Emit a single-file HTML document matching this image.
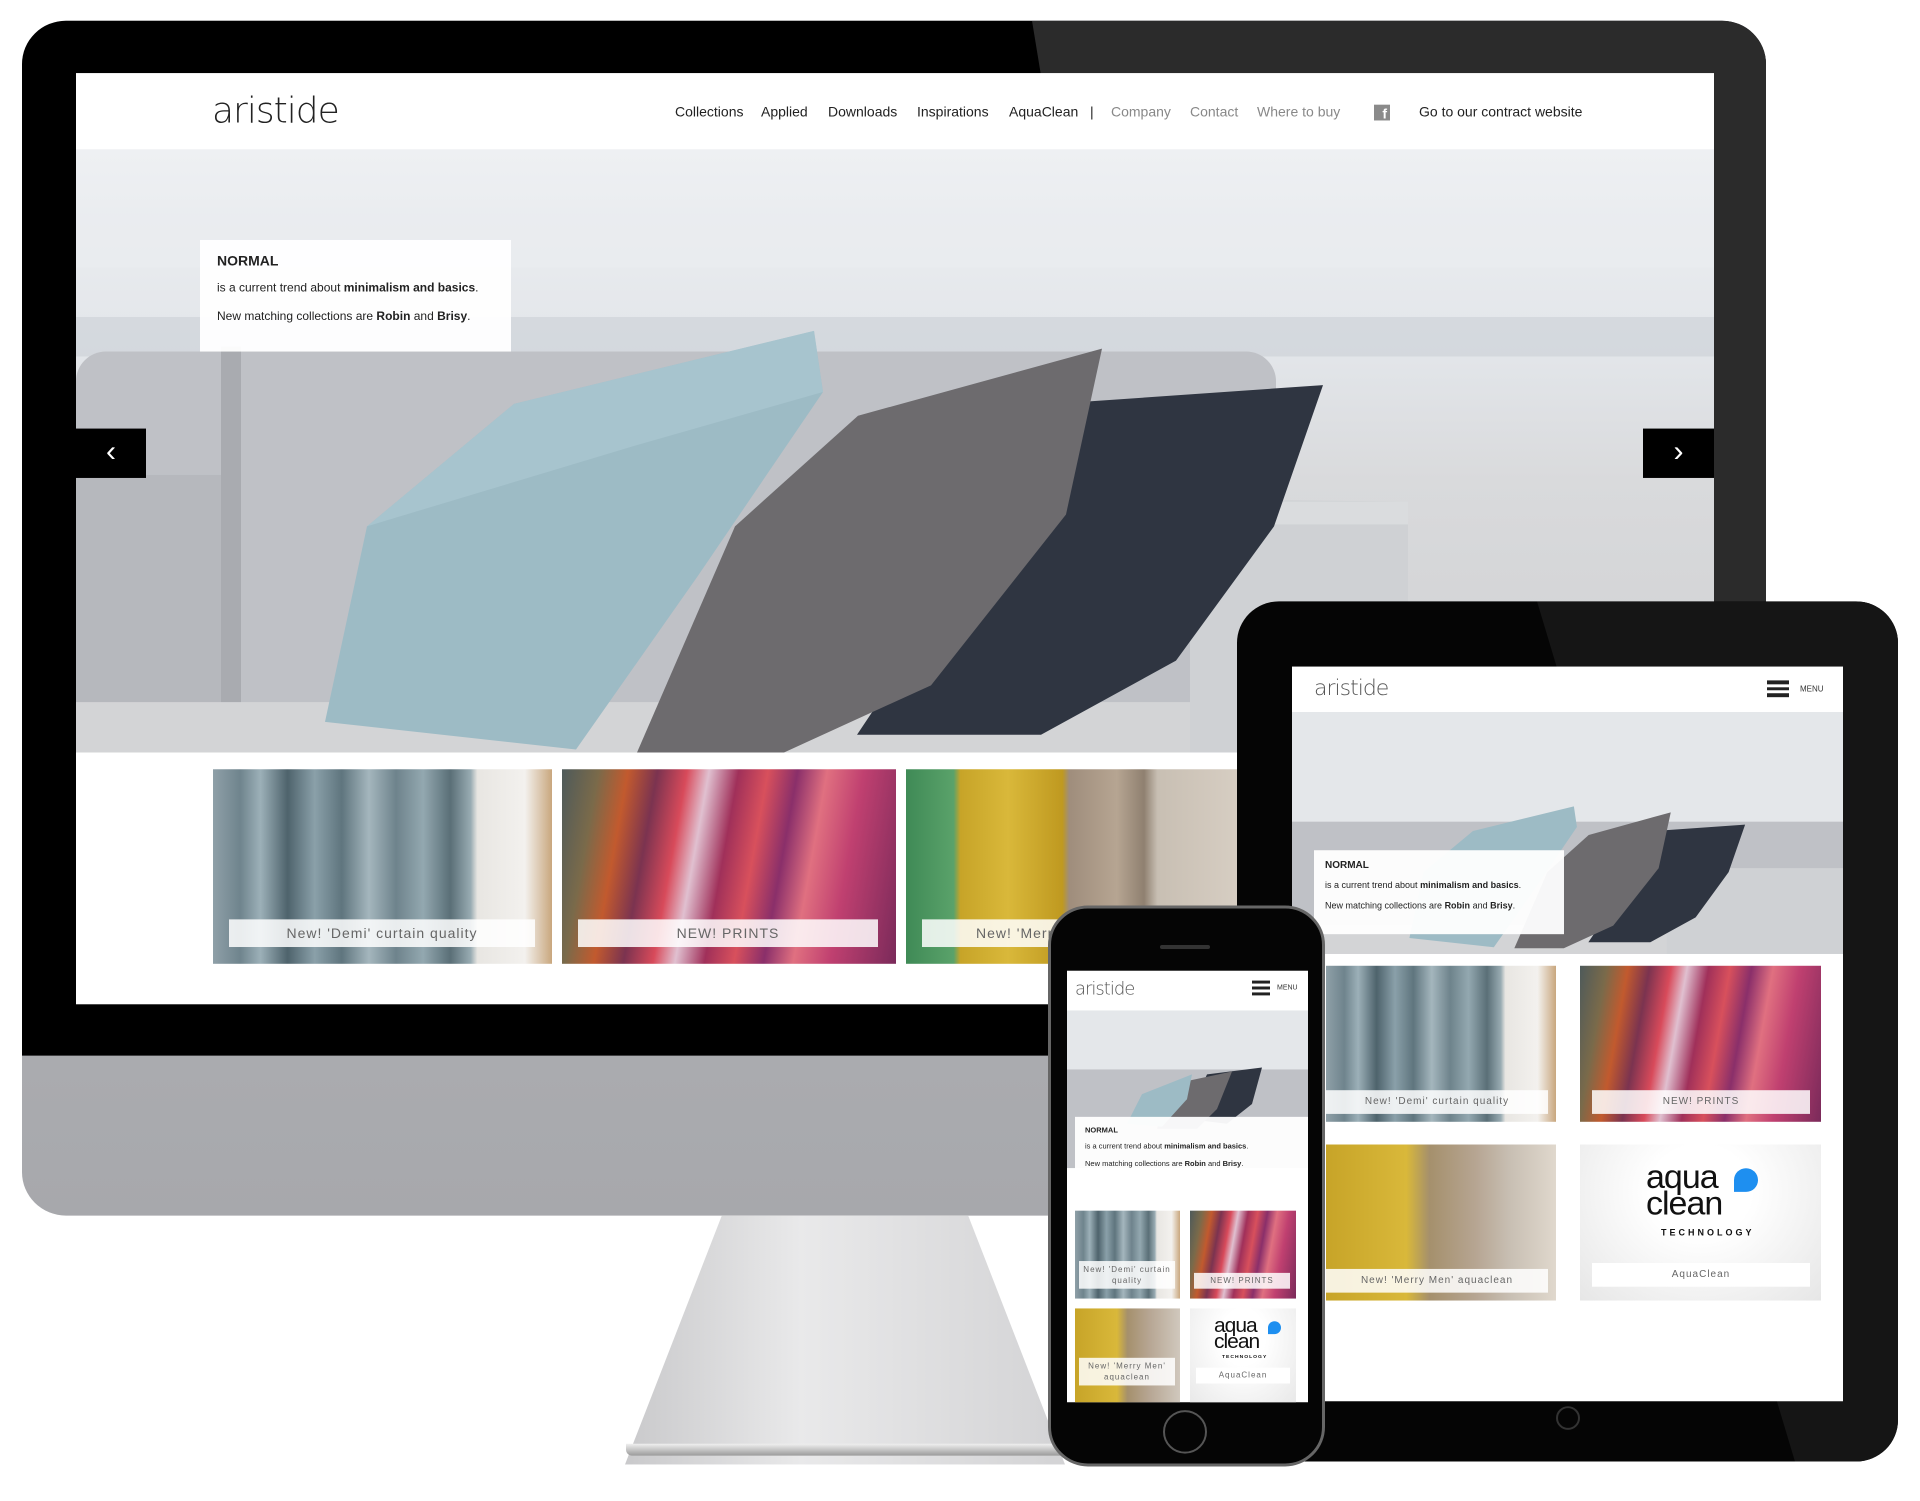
<!DOCTYPE html>
<html><head><meta charset="utf-8"><style>
*{margin:0;padding:0;box-sizing:border-box}
body{width:1920px;height:1500px;background:#fff;position:relative;overflow:hidden;font-family:"Liberation Sans",sans-serif}
#w{position:absolute;left:0;top:0;width:1920px;height:1520px;transform:scale(1,0.9875);transform-origin:0 0}
.abs{position:absolute}
.logo{font-family:"DejaVu Sans","Liberation Sans",sans-serif;font-weight:200;color:#222;letter-spacing:-1px}
.nav span{position:absolute;top:0;font-size:14px;color:#222;white-space:nowrap}
.nav .g{color:#888}
.box{background:rgba(255,255,255,.95);color:#222}
.lbl{position:absolute;background:rgba(255,255,255,.85);color:#666;text-align:center;letter-spacing:1px;white-space:nowrap;overflow:hidden}
.curt{background:linear-gradient(90deg,#8fa0a8 0%,#6f848d 8%,#9cb0b8 14%,#4e636c 22%,#8aa0a9 30%,#5f757e 38%,#a4b6bd 46%,#6e838c 54%,#93a8b0 62%,#5a6f77 70%,#98abb2 76%,#e8e6e2 78%,#f3f1ee 92%,#c9a77e 100%)}
.prnt{background:linear-gradient(100deg,#4e5a5a 0%,#7a6a4a 10%,#c25a2e 18%,#7b3350 26%,#d84a5a 34%,#e0c0d0 40%,#a0305a 48%,#d8505c 56%,#8a2f6a 64%,#e07080 72%,#c04070 82%,#7a2a5a 100%)}
.fab{background:linear-gradient(90deg,#3f8a56 0%,#5aa26a 14%,#c7a428 16%,#d9b83a 30%,#bf9920 46%,#9f8d7c 48%,#b6a592 62%,#8f8070 70%,#c8bfb3 74%,#d8cfc4 100%)}
</style></head><body><div id="w">

<!-- MONITOR -->
<div class="abs" style="left:22px;top:21px;width:1744px;height:1210px;border-radius:44px;background:linear-gradient(180deg,#bfc0c4,#a7a8ac);"></div>
<div class="abs" style="left:22px;top:21px;width:1744px;height:1048px;border-radius:44px 44px 0 0;background:#000;overflow:hidden">
  <div class="abs" style="left:0;top:0;width:1744px;height:1048px;background:#2b2b2b;clip-path:polygon(1010px 0,1744px 0,1744px 1048px,1180px 1048px)"></div>
</div>
<!-- stand -->
<div class="abs" style="left:625px;top:1231px;width:440px;height:252px;background:linear-gradient(90deg,#c9c9cb 0%,#e9e9ea 40%,#d3d3d5 100%);clip-path:polygon(22% 0,78% 0,100% 100%,0 100%);"></div>
<div class="abs" style="left:626px;top:1462px;width:444px;height:12px;background:linear-gradient(180deg,#f0f0f0,#9b9b9b);border-radius:0 0 6px 6px"></div>

<!-- monitor screen -->
<div class="abs" style="left:76px;top:74px;width:1638px;height:943px;background:#fff;overflow:hidden">
  <div class="abs logo" style="left:136px;top:18px;font-size:36px">aristide</div>
  <div class="abs nav" style="left:0;top:31px;width:1638px;height:20px">
    <span style="left:599px">Collections</span>
    <span style="left:685px">Applied</span>
    <span style="left:752px">Downloads</span>
    <span style="left:841px">Inspirations</span>
    <span style="left:933px">AquaClean</span>
    <span style="left:1014px">|</span>
    <span class="g" style="left:1035px">Company</span>
    <span class="g" style="left:1114px">Contact</span>
    <span class="g" style="left:1181px">Where to buy</span>
    <span style="left:1298px;top:1px;width:16px;height:16px;background:#8a8a8a;color:#fff;font-weight:bold;font-size:14px;text-align:right;padding-right:3px;line-height:18px">f</span>
    <span style="left:1343px">Go to our contract website</span>
  </div>
  <!-- hero -->
  <div class="abs" style="left:0;top:77px;width:1638px;height:611px;overflow:hidden">
    <svg width="1638" height="611" viewBox="0 0 1638 611">
      <defs>
        <linearGradient id="bg" x1="0" y1="0" x2="0" y2="1"><stop offset="0" stop-color="#eef0f3"/><stop offset=".35" stop-color="#e2e5e9"/><stop offset=".55" stop-color="#d9dadc"/><stop offset="1" stop-color="#cfd0d2"/></linearGradient>
      </defs>
      <rect width="1638" height="611" fill="url(#bg)"/>
      <rect x="0" y="60" width="1638" height="60" fill="#e9ecef" opacity=".7"/>
      <rect x="0" y="170" width="1638" height="40" fill="#c6ccd2" opacity=".5"/>
      <rect x="0" y="205" width="1200" height="400" rx="30" fill="#bfc1c6"/>
      <rect x="0" y="330" width="160" height="260" fill="#b6b8bd"/>
      <rect x="145" y="200" width="20" height="380" fill="#a9abb0"/>
      <rect x="0" y="560" width="1638" height="51" fill="#d3d4d6"/>
      <path d="M1114 380 Q1120 355 1160 355 L1332 357 L1332 611 L1114 611 Z" fill="#cfd1d4"/>
      <path d="M1150 357 L1332 357 L1332 380 L1150 380Z" fill="#dadcde"/>
      <polygon points="781,593 904,407 977,258 1247,239 1198,382 1100,518 965,593" fill="#2f3541"/>
      <polygon points="561,611 659,382 782,270 1026,202 990,370 855,543 708,611" fill="#6d6b6e"/>
      <polygon points="249,580 291,382 438,258 738,184 747,246 622,432 500,608" fill="#9dbbc5"/>
      <polygon points="291,382 438,258 738,184 747,246 560,300" fill="#aecad3" opacity=".6"/>
    </svg>
    <div class="abs box" style="left:124px;top:92px;width:311px;height:113px;padding:14px 17px;font-size:12px;line-height:1">
      <div style="font-size:14px;font-weight:bold;margin-bottom:14px">NORMAL</div>
      <div style="margin-bottom:17px">is a current trend about <b>minimalism and basics</b>.</div>
      <div>New matching collections are <b>Robin</b> and <b>Brisy</b>.</div>
    </div>
    <div class="abs" style="left:0;top:283px;width:70px;height:50px;background:#000;color:#fff;font-size:30px;text-align:center;line-height:48px">&#8249;</div>
    <div class="abs" style="left:1567px;top:283px;width:71px;height:50px;background:#000;color:#fff;font-size:30px;text-align:center;line-height:48px">&#8250;</div>
  </div>
  <!-- tiles -->
  <div class="abs curt" style="left:137px;top:705px;width:339px;height:197px"><div class="lbl" style="left:16px;top:152px;width:306px;height:28px;line-height:28px;font-size:14px">New! 'Demi' curtain quality</div></div>
  <div class="abs prnt" style="left:486px;top:705px;width:334px;height:197px"><div class="lbl" style="left:16px;top:152px;width:300px;height:28px;line-height:28px;font-size:14px">NEW! PRINTS</div></div>
  <div class="abs fab" style="left:830px;top:705px;width:340px;height:197px"><div class="lbl" style="left:16px;top:152px;width:320px;height:28px;line-height:28px;font-size:14px;text-align:left;padding-left:54px">New! 'Merry Men' aquaclean</div></div>
</div>

<!-- TABLET -->
<div class="abs" style="left:1237px;top:609px;width:661px;height:871px;border-radius:42px;background:#050505;overflow:hidden">
  <div class="abs" style="left:0;top:0;width:661px;height:878px;background:#151515;clip-path:polygon(300px 0,661px 0,661px 878px,560px 878px)"></div>
</div>
<div class="abs" style="left:1556px;top:1424px;width:24px;height:24px;border-radius:50%;border:2px solid #333;"></div>
<div class="abs" style="left:1292px;top:675px;width:551px;height:744px;background:#fff;overflow:hidden">
  <div class="abs logo" style="left:22px;top:10px;font-size:22px;color:#555">aristide</div>
  <div class="abs" style="left:475px;top:14px;width:22px;height:17px;border-top:4px solid #222;border-bottom:4px solid #222"><div style="margin-top:3px;height:3px;background:#222"></div></div>
  <div class="abs" style="left:508px;top:18px;font-size:8px;color:#333">MENU</div>
  <div class="abs" style="left:0;top:46px;width:551px;height:245px;overflow:hidden">
    <svg width="551" height="245" viewBox="0 0 1638 728" preserveAspectRatio="none"><rect width="1638" height="728" fill="#e4e7ea"/><rect x="0" y="330" width="1638" height="400" fill="#bfc1c6"/><rect x="0" y="640" width="1638" height="90" fill="#d3d4d6"/><path d="M1114 470 L1638 470 L1638 728 L1114 728Z" fill="#cfd1d4"/><polygon points="881,693 1004,507 1077,358 1347,339 1298,482 1200,618 1065,693" fill="#2f3541"/><polygon points="661,711 759,482 882,370 1126,302 1090,470 955,643 808,711" fill="#6d6b6e"/><polygon points="349,680 391,482 538,358 838,284 847,346 722,532 600,708" fill="#9dbbc5"/></svg>
    <div class="abs box" style="left:22px;top:140px;width:250px;height:85px;padding:11px 11px;font-size:9px;line-height:1">
      <div style="font-size:10px;font-weight:bold;margin-bottom:10px">NORMAL</div>
      <div style="margin-bottom:12px">is a current trend about <b>minimalism and basics</b>.</div>
      <div>New matching collections are <b>Robin</b> and <b>Brisy</b>.</div>
    </div>
  </div>
  <div class="abs curt" style="left:34px;top:303px;width:230px;height:158px"><div class="lbl" style="left:0;top:126px;width:222px;height:24px;line-height:24px;font-size:10px">New! 'Demi' curtain quality</div></div>
  <div class="abs prnt" style="left:288px;top:303px;width:241px;height:158px"><div class="lbl" style="left:12px;top:126px;width:218px;height:24px;line-height:24px;font-size:10px">NEW! PRINTS</div></div>
  <div class="abs fab" style="left:34px;top:484px;width:230px;height:158px;background:linear-gradient(90deg,#c7a428 0%,#d9b83a 35%,#a5906c 45%,#b6a592 65%,#c8bfb3 80%,#e0d8cd 100%)"><div class="lbl" style="left:0;top:126px;width:222px;height:24px;line-height:24px;font-size:10px">New! 'Merry Men' aquaclean</div></div>
  <div class="abs" style="left:288px;top:484px;width:241px;height:158px;background:radial-gradient(ellipse at 50% 30%,#fff 30%,#e6e6e6 100%)">
    <div class="abs" style="left:66px;top:20px;font-size:34px;line-height:27px;color:#111;letter-spacing:-1px">aqua<br>clean</div>
    <div class="abs" style="left:154px;top:24px;width:24px;height:24px;background:#1e8ff0;border-radius:50% 50% 50% 0"></div>
    <div class="abs" style="left:81px;top:84px;font-size:9px;font-weight:bold;letter-spacing:3px;color:#111">TECHNOLOGY</div>
    <div class="lbl" style="left:12px;top:120px;width:218px;height:24px;line-height:24px;font-size:10px;background:#fff">AquaClean</div>
  </div>
</div>

<!-- PHONE -->
<div class="abs" style="left:1048px;top:917px;width:277px;height:568px;border-radius:40px;background:#050505;border:3px solid #666"></div>
<div class="abs" style="left:1160px;top:957px;width:50px;height:4px;border-radius:2px;background:#333"></div>
<div class="abs" style="left:1163px;top:1428px;width:44px;height:44px;border-radius:50%;border:2px solid #555"></div>
<div class="abs" style="left:1067px;top:983px;width:241px;height:437px;background:#fff;overflow:hidden">
  <div class="abs logo" style="left:8px;top:8px;font-size:18px;color:#555">aristide</div>
  <div class="abs" style="left:185px;top:10px;width:18px;height:15px;border-top:3px solid #222;border-bottom:3px solid #222"><div style="margin-top:3px;height:3px;background:#222"></div></div>
  <div class="abs" style="left:210px;top:14px;font-size:7px;color:#333">MENU</div>
  <div class="abs" style="left:0;top:40px;width:241px;height:160px;overflow:hidden">
    <svg width="241" height="160" viewBox="0 0 241 160" preserveAspectRatio="none"><rect width="241" height="160" fill="#e4e7ea"/><rect y="60" width="241" height="100" fill="#bfc1c6"/><polygon points="120,110 140,65 195,58 185,95 160,115" fill="#2f3541"/><polygon points="90,120 105,75 165,62 150,100 130,120" fill="#6d6b6e"/><polygon points="60,115 75,85 125,65 120,90 95,118" fill="#9dbbc5"/></svg>
  </div>
  <div class="abs box" style="left:8px;top:148px;width:233px;height:80px;padding:10px;font-size:7.5px;line-height:1">
    <div style="font-weight:bold;margin-bottom:8px">NORMAL</div>
    <div style="margin-bottom:11px">is a current trend about <b>minimalism and basics</b>.</div>
    <div>New matching collections are <b>Robin</b> and <b>Brisy</b>.</div>
  </div>
  <div class="abs curt" style="left:8px;top:243px;width:105px;height:89px"><div class="lbl" style="left:4px;top:51px;width:96px;height:28px;line-height:11px;font-size:8px;padding-top:3px;white-space:normal">New! 'Demi' curtain quality</div></div>
  <div class="abs prnt" style="left:123px;top:243px;width:106px;height:89px"><div class="lbl" style="left:4px;top:63px;width:96px;height:16px;line-height:16px;font-size:8px">NEW! PRINTS</div></div>
  <div class="abs fab" style="left:8px;top:342px;width:105px;height:97px;background:linear-gradient(90deg,#c7a428 0%,#d9b83a 40%,#a5906c 50%,#b6a592 70%,#d0c8bd 100%)"><div class="lbl" style="left:4px;top:50px;width:96px;height:28px;line-height:11px;font-size:8px;padding-top:3px;white-space:normal">New! 'Merry Men' aquaclean</div></div>
  <div class="abs" style="left:123px;top:342px;width:106px;height:97px;background:radial-gradient(ellipse at 50% 30%,#fff 30%,#e8e8e8 100%)">
    <div class="abs" style="left:24px;top:10px;font-size:21px;line-height:16px;color:#111;letter-spacing:-1px">aqua<br>clean</div>
    <div class="abs" style="left:78px;top:13px;width:13px;height:13px;background:#1e8ff0;border-radius:50% 50% 50% 0"></div>
    <div class="abs" style="left:32px;top:46px;font-size:5px;font-weight:bold;letter-spacing:1px;color:#111">TECHNOLOGY</div>
    <div class="lbl" style="left:6px;top:60px;width:94px;height:16px;line-height:16px;font-size:8px;background:#fff">AquaClean</div>
  </div>
</div>
</div></body></html>
